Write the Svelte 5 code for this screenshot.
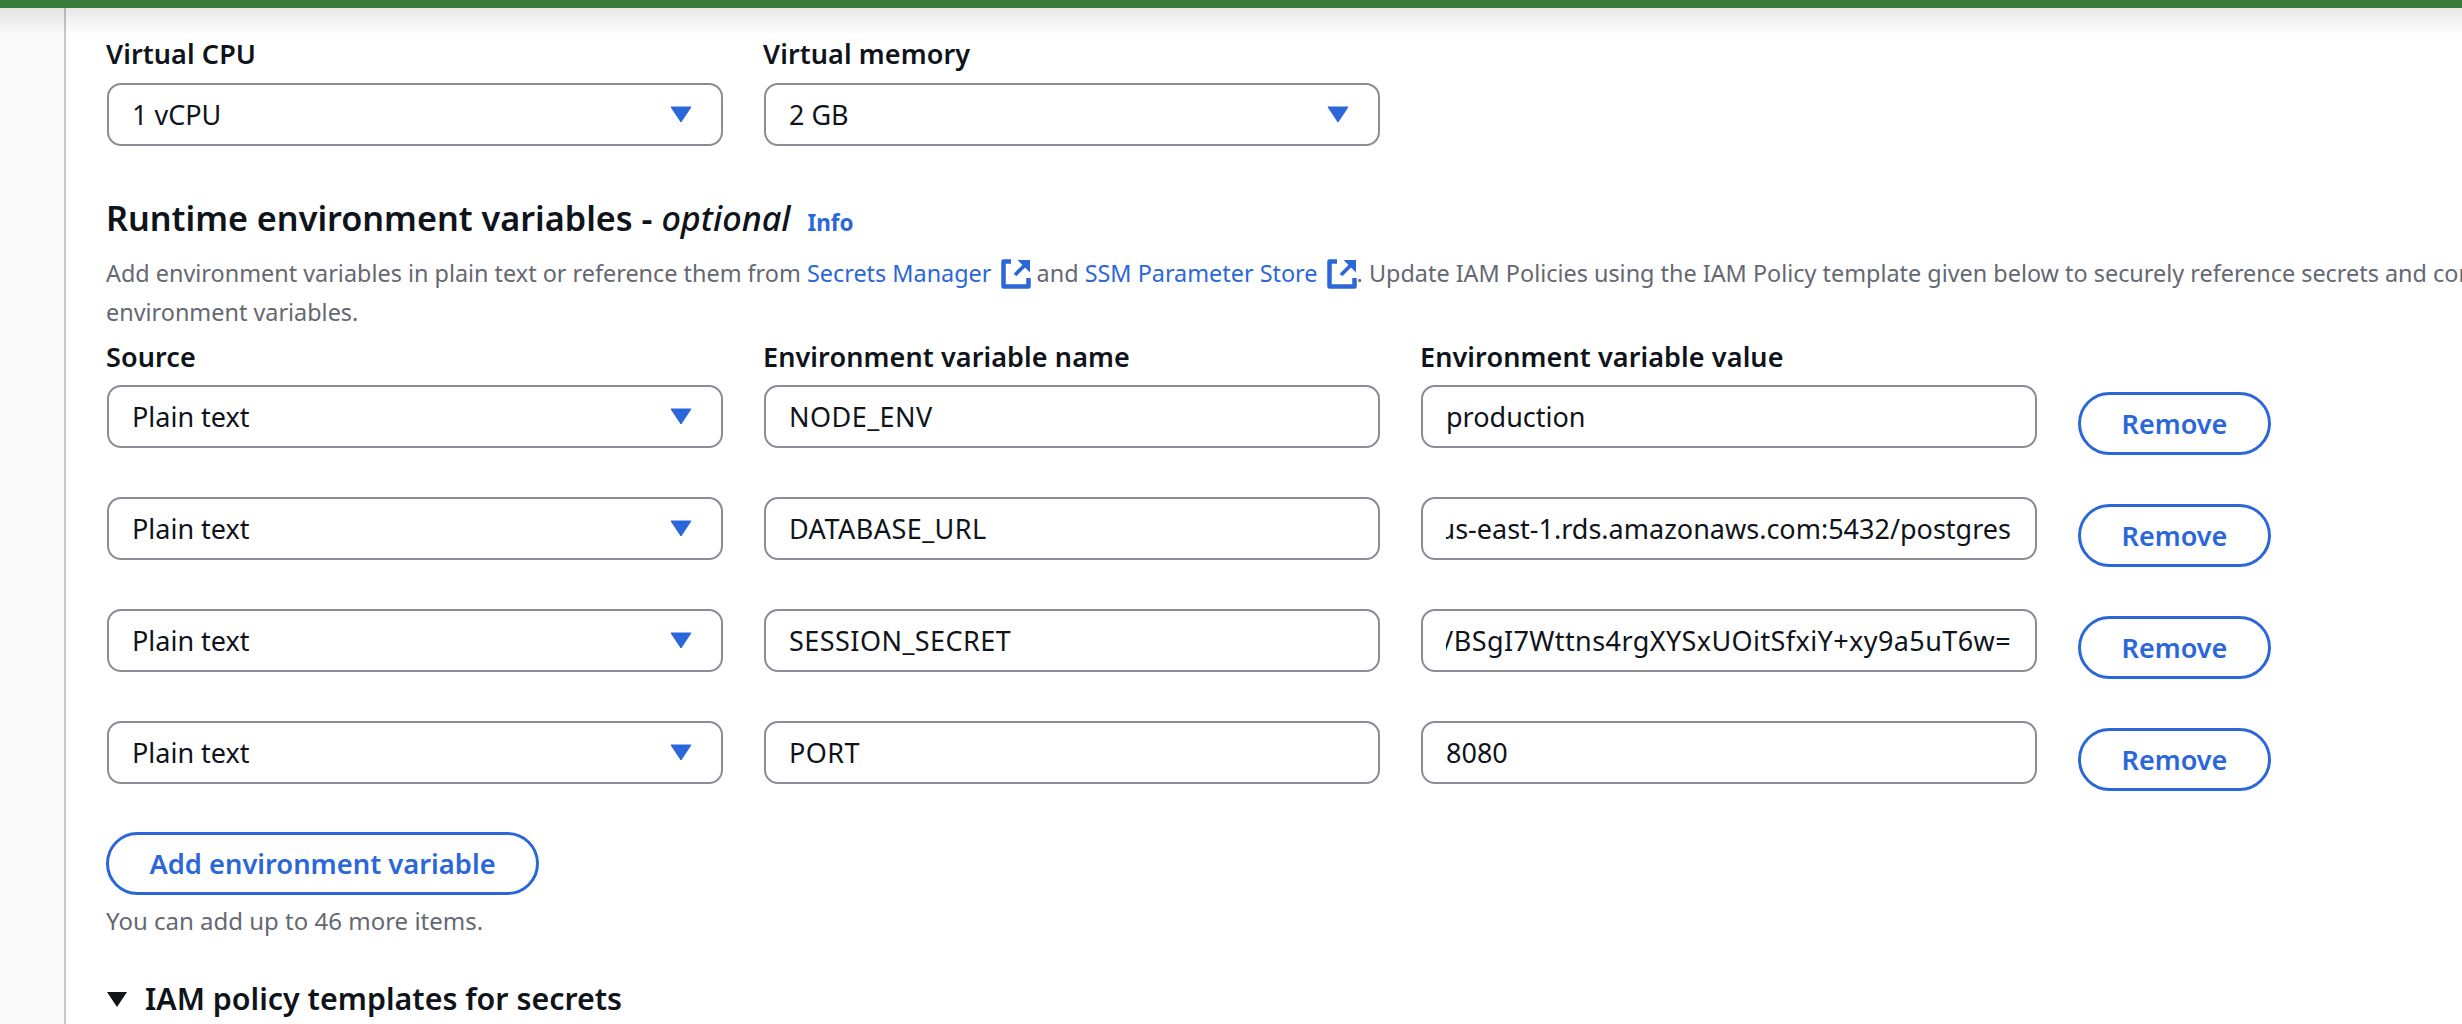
<script>
  let rows = [
    { name: 'NODE_ENV', value: 'production' },
    { name: 'DATABASE_URL', value: 'neondb.cluster.us-east-1.rds.amazonaws.com:5432/postgres', clipped: true },
    { name: 'SESSION_SECRET', value: 'k3mQ9/BSgI7Wttns4rgXYSxUOitSfxiY+xy9a5uT6w=', clipped: true, secret: true },
    { name: 'PORT', value: '8080' }
  ];
</script>

{#snippet caret()}
  <svg class="caret" width="22" height="17" viewBox="0 0 22 17"><path d="M1 1h20L11 16z" fill="#2b67d9" stroke="#2b67d9" stroke-width="1" stroke-linejoin="round" /></svg>
{/snippet}

{#snippet external()}
  <svg class="ext" width="30" height="30" viewBox="0 0 30 30" fill="none" stroke="#2b67d9" stroke-width="4.500">
    <path d="M10 2.500H2.500v25h25V19" stroke-linejoin="round" />
    <path d="M14 16L25 5" stroke-width="3.800" />
    <path d="M16.500 1h12.500v12.500z" fill="#2b67d9" stroke="none" />
  </svg>
{/snippet}

<div class="page">
  <div class="topbar"></div>
  <div class="shadow"></div>
  <main class="content">
    <div class="grid top">
      <div class="field">
        <div class="label">Virtual CPU</div>
        <div class="box select">1 vCPU {@render caret()}</div>
      </div>
      <div class="field">
        <div class="label">Virtual memory</div>
        <div class="box select">2 GB {@render caret()}</div>
      </div>
    </div>

    <h2>Runtime environment variables - <em>optional</em> <a class="info" href="#info">Info</a></h2>
    <p class="desc">
      Add environment variables in plain text or reference them from <a href="#sm">Secrets Manager {@render external()}</a> and <a href="#ssm">SSM Parameter Store {@render external()}</a>. Update IAM Policies using the IAM Policy template given below to securely reference secrets and configure your<br />environment variables.
    </p>

    <div class="grid heads">
      <div class="label">Source</div>
      <div class="label">Environment variable name</div>
      <div class="label">Environment variable value</div>
    </div>

    {#each rows as row}
      <div class="grid row">
        <div class="box select">Plain text {@render caret()}</div>
        <div class="box name">{row.name}</div>
        <div class="box">
          <div class="value" class:clipped={row.clipped} class:secret={row.secret}><span>{row.value}</span></div>
        </div>
        <button class="btn remove">Remove</button>
      </div>
    {/each}

    <button class="btn add">Add environment variable</button>
    <p class="hint">You can add up to 46 more items.</p>

    <div class="expander">
      <svg width="22" height="17" viewBox="0 0 22 17"><path d="M1 1h20L11 16z" fill="#0f141a" /></svg>
      IAM policy templates for secrets
    </div>
  </main>
</div>

<style>
  :global(body) {
    margin: 0;
    background: #fff;
  }

  .page {
    position: relative;
    height: 1024px;
    overflow: hidden;
    font-family: "Noto Sans", sans-serif;
    font-size: 27px;
    color: #0f141a;
    background: linear-gradient(to right, #fafafa 0, #fafafa 64px, #c6c6cd 64px, #c6c6cd 66px, #fff 66px);
  }

  .topbar {
    height: 8px;
    background: #3a7d3a;
  }

  .shadow {
    position: absolute;
    top: 8px;
    left: 0;
    right: 0;
    height: 28px;
    background: linear-gradient(to bottom, rgba(0, 0, 0, 0.09), rgba(0, 0, 0, 0));
  }

  .content {
    padding: 29px 0 0 107px;
  }

  .grid {
    display: grid;
    grid-template-columns: 616px 616px 616px auto;
    column-gap: 41px;
    justify-content: start;
  }

  .label {
    font-weight: 600;
    line-height: 34px;
    height: 34px;
    margin-bottom: 12px;
    margin-left: -1px;
    letter-spacing: 0.1px;
  }

  .box {
    box-sizing: border-box;
    height: 63px;
    border: 2px solid #8c8c94;
    border-radius: 14px;
    padding: 0 24px 0 23px;
    display: flex;
    align-items: center;
    background: #fff;
    white-space: nowrap;
    overflow: hidden;
  }

  .select {
    justify-content: space-between;
    padding-right: 29px;
  }

  .name {
    letter-spacing: 0.45px;
  }

  .value {
    flex: 1;
    display: flex;
    min-width: 0;
    overflow: hidden;
  }

  .value.clipped {
    justify-content: flex-end;
  }

  .value.secret {
    letter-spacing: 0.4px;
  }

  .value span {
    flex: none;
  }

  h2 {
    margin: 49px 0 0 -1px;
    font-size: 34.200px;
    line-height: 45px;
    font-weight: 600;
  }

  h2 em {
    font-weight: 500;
  }

  .info {
    font-size: 22.500px;
    font-weight: 700;
    margin-left: 8px;
  }

  a {
    color: #2b67d9;
    text-decoration: none;
  }

  .desc {
    margin: 9px 0 0 -1px;
    width: 2356px;
    white-space: nowrap;
    overflow: hidden;
    color: #656871;
    line-height: 39px;
    font-size: 23.400px;
  }

  .ext {
    vertical-align: -7px;
    margin-left: 3px;
  }

  .heads {
    margin-top: 8px;
  }

  .heads .label {
    margin-bottom: 11px;
  }

  .row {
    margin-bottom: 42px;
  }

  .btn {
    box-sizing: border-box;
    height: 63px;
    border: 3.500px solid #2b67d9;
    border-radius: 32px;
    background: #fff;
    color: #2b67d9;
    font: 600 27px "Noto Sans", sans-serif;
    padding: 0;
  }

  .remove {
    width: 193px;
    margin-top: 7px;
  }

  .add {
    display: block;
    width: 433px;
    margin: -1px 0 0 -1px;
    font-size: 27.300px;
  }

  .hint {
    margin: 9px 0 0 -1px;
    color: #656871;
    font-size: 24px;
    line-height: 34px;
  }

  .expander {
    margin: 43px 0 0 -1px;
    display: flex;
    align-items: center;
    gap: 17px;
    font-weight: 600;
    font-size: 30.400px;
    line-height: 36px;
  }
</style>
